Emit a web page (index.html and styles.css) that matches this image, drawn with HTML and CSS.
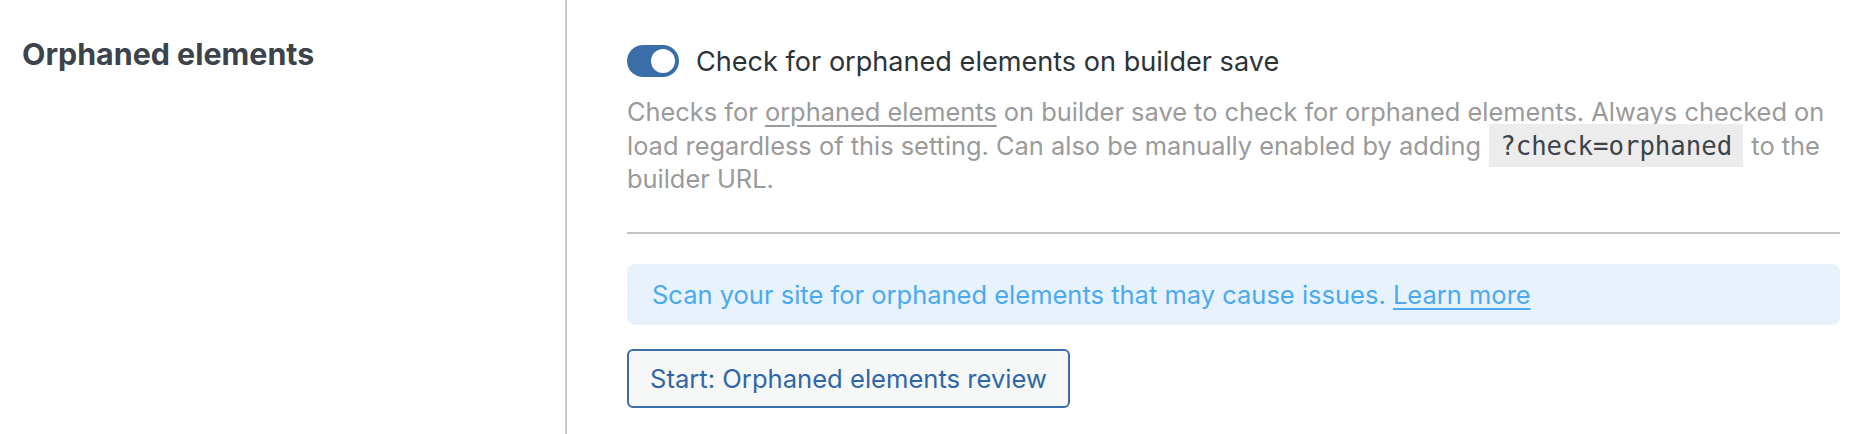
FILE: index.html
```html
<!DOCTYPE html>
<html lang="en">
<head>
<meta charset="utf-8">
<title>Orphaned elements</title>
<link rel="stylesheet" href="styles.css">
</head>
<body>
<div class="setting-row">
  <div class="setting-label">
    <h2 class="setting-title">Orphaned elements</h2>
  </div>
  <div class="setting-body">
    <label class="toggle-row">
      <span class="toggle"><span class="toggle-knob"></span></span>
      <span class="toggle-label">Check for orphaned elements on builder save</span>
    </label>
    <p class="description">Checks for <a href="#" class="desc-link">orphaned elements</a> on builder save to check for orphaned elements. Always checked on load regardless of this setting. Can also be manually enabled by adding <code class="code">?check=orphaned</code> to the builder URL.</p>
    <hr class="divider">
    <div class="notice">Scan your site for orphaned elements that may cause issues. <a href="#" class="notice-link">Learn more</a></div>
    <div class="actions">
      <button class="btn" type="button">Start: Orphaned elements review</button>
    </div>
  </div>
</div>
</body>
</html>
```

FILE: styles.css
```css
html, body {
  margin: 0;
  padding: 0;
  background: #ffffff;
  height: 100%;
}

body {
  font-family: Inter, Roboto, "Liberation Sans", sans-serif;
  color: #3c434a;
}

.setting-row {
  display: flex;
  height: 434px;
}

.setting-label {
  width: 565px;
  flex-shrink: 0;
  padding-left: 22px;
  box-sizing: border-box;
}

.setting-title {
  margin: 36px 0 0;
  font-size: 30.4px;
  line-height: 36px;
  font-weight: 700;
  color: #3c434a;
}

.setting-body {
  border-left: 2px solid #c9c9c9;
  padding: 45px 34px 0 60px;
  flex: 1;
  display: flex;
  flex-direction: column;
}

.toggle-row {
  display: flex;
  align-items: center;
  gap: 17px;
  height: 32px;
}

.toggle {
  width: 52px;
  height: 32px;
  border-radius: 16px;
  background: #3a6ea8;
  display: flex;
  align-items: center;
  justify-content: flex-end;
  padding-right: 4px;
  box-sizing: border-box;
  flex-shrink: 0;
}

.toggle-knob {
  width: 24px;
  height: 24px;
  border-radius: 50%;
  background: #ffffff;
}

.toggle-label {
  font-size: 27.1px;
  color: #2c3338;
  white-space: nowrap;
}

.description {
  margin: 18px 0 0;
  font-size: 25.4px;
  line-height: 33.5px;
  color: #9a9a9a;
}

.desc-link {
  color: #9a9a9a;
  text-decoration: underline;
  text-underline-offset: 4px;
}

.code {
  font-family: "DejaVu Sans Mono", "Liberation Mono", monospace;
  font-size: 25.7px;
  line-height: 1;
  color: #3c434a;
  background: #ececec;
  padding: 7px 11px 6px;
  margin: 0 1px;
}

.divider {
  border: 0;
  border-top: 2px solid #c3c4c7;
  margin: 36px 0 0;
  height: 0;
}

.notice {
  margin-top: 30px;
  background: #e8f2fc;
  border-radius: 8px;
  height: 61px;
  box-sizing: border-box;
  padding: 0 25px;
  display: flex;
  align-items: center;
  font-size: 25.5px;
  color: #4aaaf0;
  white-space: pre;
}

.notice-link {
  color: #4aaaf0;
  text-decoration: underline;
  text-underline-offset: 4px;
}

.actions {
  margin-top: 24px;
  display: flex;
}

.btn {
  font-family: Inter, Roboto, "Liberation Sans", sans-serif;
  height: 59px;
  border: 2px solid #3a6ea8;
  border-radius: 6px;
  background: #f6f7f7;
  color: #2f67a6;
  font-size: 25.6px;
  padding: 0 21px;
  white-space: nowrap;
}
```
